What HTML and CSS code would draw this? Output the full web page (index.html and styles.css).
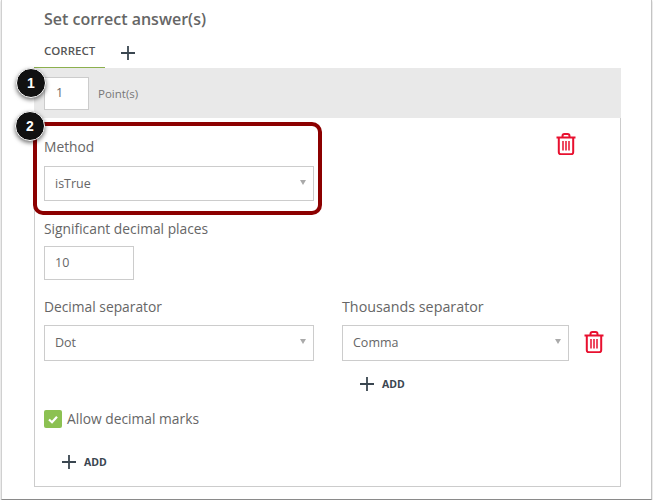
FILE: index.html
```html
<!DOCTYPE html>
<html lang="en">
<head>
    <meta charset="UTF-8">
    <title>Set correct answer(s)</title>
    <link rel="stylesheet" href="styles.css">
</head>
<body>

<svg class="defs" width="0" height="0">
    <symbol id="trash" viewBox="0 0 20 22">
        <path d="M0.500 4.500h19M6.500 4.500V3a2 2 0 0 1 2-2h3a2 2 0 0 1 2 2v1.500M2.800 4.500v14.700a2 2 0 0 0 2 2h10.400a2 2 0 0 0 2-2V4.500" fill="none" stroke="currentColor" stroke-width="2"/>
        <path d="M7 8v9.500M10 8v9.500M13 8v9.500" fill="none" stroke="currentColor" stroke-width="1.500"/>
    </symbol>
    <symbol id="plus" viewBox="0 0 14 14">
        <path d="M7 0v14M0 7h14" fill="none" stroke="currentColor" stroke-width="1.800"/>
    </symbol>
</svg>

<div class="window">
    <h2 class="title">Set correct answer(s)</h2>

    <div class="tabs">
        <div class="tab">CORRECT</div>
        <svg class="tab-plus"><use href="#plus"/></svg>
    </div>

    <div class="panel">
        <div class="points-bar">
            <div class="field points-input">1</div>
            <span class="points-label">Point(s)</span>
        </div>

        <div class="panel-body">
            <div class="method-row">
                <div class="method-col">
                    <label class="label">Method</label>
                    <div class="field select method-select">isTrue</div>
                </div>
                <svg class="trash trash-method"><use href="#trash"/></svg>
            </div>

            <label class="label places-label">Significant decimal places</label>
            <div class="field places-input">10</div>

            <div class="separators">
                <div class="sep-col">
                    <label class="label">Decimal separator</label>
                    <div class="field select sep-select">Dot</div>
                </div>
                <div class="sep-col thousands">
                    <label class="label thousands-label">Thousands separator</label>
                    <div class="thousands-row">
                        <div class="field select thousands-select">Comma</div>
                        <svg class="trash"><use href="#trash"/></svg>
                    </div>
                    <div class="add add-thousands">
                        <svg class="add-plus"><use href="#plus"/></svg>
                        ADD
                    </div>
                </div>
            </div>

            <div class="check-row">
                <span class="checkbox">
                    <svg viewBox="0 0 18 18" width="18" height="18"><path d="M5 9.500l3 2.800 5-5.600" fill="none" stroke="#fff" stroke-width="2.200"/></svg>
                </span>
                <span class="check-label">Allow decimal marks</span>
            </div>

            <div class="add add-bottom">
                <svg class="add-plus"><use href="#plus"/></svg>
                ADD
            </div>
        </div>
    </div>

    <!-- annotations on top of the screenshot -->
    <div class="highlight"></div>
    <div class="callout callout-1">1</div>
    <div class="callout callout-2">2</div>
</div>

</body>
</html>
```

FILE: styles.css
```css
* {
    box-sizing: border-box;
}

body {
    margin: 0;
    font-family: "Open Sans", "Noto Sans", sans-serif;
    color: #666;
    background-color: #fff;
}

.defs {
    position: absolute;
}

.window {
    position: relative;
    width: 651px;
    height: 500px;
    margin-left: 1px;
    padding: 10px 29px 0 32px;
    background-color: #fff;
    border-left: 1px solid #d0d0d0;
    border-right: 1px solid #c4c4c4;
    border-bottom: 1px solid #8a8a8a;
    box-shadow: 0 1px 2px rgba(0, 0, 0, 0.25);
}

.title {
    margin: 0 0 0 10px;
    font-size: 16px;
    font-weight: 600;
    line-height: 19px;
    color: #666;
}

.tabs {
    display: flex;
    height: 39px;
}

.tab {
    width: 71px;
    padding: 14px 0 0 10px;
    font-size: 11.5px;
    font-weight: 600;
    line-height: 16px;
    color: #555;
    border-bottom: 1px solid #8cb04e;
}

.tab-plus {
    width: 14px;
    height: 14px;
    margin: 17px 0 0 16px;
    color: #3a4650;
}

.panel {
    width: 587px;
    height: 419px;
    border: 1px solid #ccc;
    border-top: none;
}

.points-bar {
    display: flex;
    align-items: center;
    height: 50px;
    margin: 0 -1px;
    padding-left: 10px;
    background-color: #e9e9e9;
}

.field {
    font-size: 12.5px;
    color: #666;
    background-color: #fff;
    border: 1px solid #ccc;
}

.points-input {
    width: 45px;
    height: 33px;
    padding-left: 11px;
    line-height: 29px;
}

.points-label {
    margin-left: 9px;
    font-size: 11.5px;
    color: #777;
}

.panel-body {
    padding: 0 0 0 9px;
}

.label {
    display: block;
    font-size: 13.8px;
    line-height: 19px;
    color: #666;
}

.thousands-label {
    font-size: 14.3px;
}

.method-row {
    display: flex;
    padding-top: 19px;
}

.method-col {
    width: 270px;
}

.select {
    position: relative;
    padding-left: 10px;
}

/* dropdown arrow */
.select::after {
    content: "";
    position: absolute;
    right: 7px;
    top: 13px;
    border-left: 3.500px solid transparent;
    border-right: 3.500px solid transparent;
    border-top: 5px solid #aaa;
}

.method-select {
    height: 35px;
    margin-top: 10px;
    line-height: 33px;
}

.trash {
    width: 20px;
    height: 22px;
    color: #e8102f;
}

.trash-method {
    margin: -4px 0 0 242px;
}

.places-label {
    margin-top: 18px;
}

.places-input {
    width: 90px;
    height: 34px;
    margin-top: 8px;
    padding-left: 10px;
    line-height: 32px;
}

.separators {
    display: flex;
    margin-top: 17px;
}

.sep-col {
    width: 270px;
}

.thousands {
    width: auto;
    margin-left: 28px;
}

.sep-select {
    height: 36px;
    margin-top: 9px;
    line-height: 34px;
}

.thousands-row {
    display: flex;
    align-items: flex-start;
}

.thousands-select {
    width: 227px;
    height: 36px;
    margin-top: 9px;
    line-height: 34px;
}

.thousands-row .trash {
    margin: 15px 0 0 15px;
}

.add {
    display: flex;
    align-items: center;
    font-size: 10.5px;
    font-weight: 700;
    line-height: 14px;
    color: #3a4650;
}

.add-plus {
    width: 14px;
    height: 14px;
    margin-right: 8px;
    color: #3a4650;
}

.add-thousands {
    margin: 16px 0 0 18px;
}

.check-row {
    display: flex;
    align-items: center;
    margin-top: 18px;
}

.checkbox {
    width: 18px;
    height: 18px;
    background-color: #8cc152;
    border-radius: 2px;
}

.checkbox svg {
    display: block;
}

.check-label {
    margin-left: 5px;
    font-size: 13.8px;
    color: #666;
}

.add-bottom {
    margin: 27px 0 0 18px;
}

.highlight {
    position: absolute;
    left: 31px;
    top: 122px;
    width: 289px;
    height: 93px;
    border: 4px solid #8c0000;
    border-radius: 10px;
}

.callout {
    position: absolute;
    width: 30px;
    height: 30px;
    font-family: "Liberation Sans", Arial, sans-serif;
    font-size: 14px;
    font-weight: 700;
    line-height: 28px;
    text-align: center;
    color: #fff;
    background-color: #111;
    border: 1px solid #fff;
    border-radius: 50%;
    box-shadow: 0 2px 4px rgba(0, 0, 0, 0.55);
}

.callout-1 {
    left: 14px;
    top: 68px;
}

.callout-2 {
    left: 13px;
    top: 111px;
}
```
